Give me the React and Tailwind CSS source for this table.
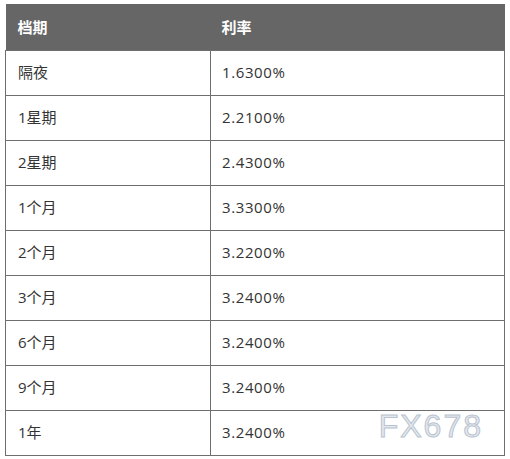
const rows = [
  ["隔夜", "1.6300%"],
  ["1星期", "2.2100%"],
  ["2星期", "2.4300%"],
  ["1个月", "3.3300%"],
  ["2个月", "3.2200%"],
  ["3个月", "3.2400%"],
  ["6个月", "3.2400%"],
  ["9个月", "3.2400%"],
  ["1年", "3.2400%"],
];

export default function App() {
  return (
    <div
      className="h-[459px] w-[510px] bg-white pl-[5px] pt-[4px]"
      style={{ fontFamily: '"Open Sans", "Noto Sans CJK SC", sans-serif' }}
    >
      <div className="relative w-[500px]">
        <table className="w-full border-collapse text-[15px] text-[#333]">
          <thead>
            <tr className="h-[46px] bg-[#666666] text-left text-white">
              <th className="w-[205px] pl-[12px] font-bold">档期</th>
              <th className="pl-[11px] font-bold">利率</th>
            </tr>
          </thead>
          <tbody>
            {rows.map(([term, rate]) => (
              <tr key={term} className="h-[45px]">
                <td className="border border-[#6e6e6e] pl-[12px]">{term}</td>
                <td className="border border-[#6e6e6e] pl-[11px] tracking-[0.6px]">
                  {rate}
                </td>
              </tr>
            ))}
          </tbody>
        </table>
        <div
          className="absolute bottom-[14px] right-[22px] text-[32px] leading-none tracking-[2px] text-[#e4e9ef]"
          style={{
            fontFamily: '"Liberation Sans", sans-serif',
            WebkitTextStroke: "1px #b9c3cf",
          }}
        >
          FX678
        </div>
      </div>
    </div>
  );
}
